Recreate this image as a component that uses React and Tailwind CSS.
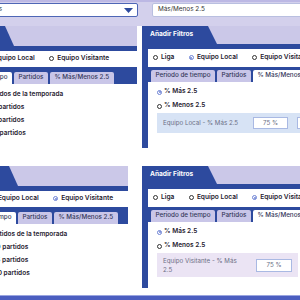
import React from "react";

const tabs = ["Periodo de tiempo", "Partidos", "% Más/Menos 2.5"];
const teams = ["Liga", "Equipo Local", "Equipo Visitante"];
const periods = [
  "Todos partidos de la temporada",
  "Últimos 10 partidos",
  "Últimos 15 partidos",
  "Últimos 20 partidos",
];

function Radio({ checked }) {
  if (checked) {
    return (
      <span className="flex h-[5px] w-[5px] shrink-0 items-center justify-center rounded-full border border-[#6d82d4]">
        <span className="h-[2px] w-[2px] rounded-full bg-[#6d82d4]" />
      </span>
    );
  }
  return <span className="h-[5px] w-[5px] shrink-0 rounded-full border border-[#333]" />;
}

function Panel({ team, active, tall, children }) {
  return (
    <div className="flex h-[122px] w-full flex-col overflow-hidden">
      <div className={`flex shrink-0 bg-[#cbc8e8] ${tall ? "h-[20px]" : "h-[18px]"}`}>
        <div className="flex w-[75px] shrink-0 items-center bg-[#2d4a9e] pl-[8px] text-[6.6px] font-bold whitespace-nowrap text-white [clip-path:polygon(0_0,88%_0,100%_100%,0_100%)]">
          Añadir Filtros
        </div>
      </div>
      <div className="flex flex-1 flex-col bg-[#2d4a9e] pl-[6px] pt-[5px]">
        <div
          className={`flex shrink-0 items-center gap-[14.5px] bg-white pl-[5px] ${tall ? "h-[16px]" : "h-[18px]"}`}
        >
          {teams.map((t, i) => (
            <div key={t} className="flex items-center gap-[3px] whitespace-nowrap text-[6.6px] font-semibold text-[#1f2230]">
              <Radio checked={i === team} />
              <span>{t}</span>
            </div>
          ))}
        </div>
        <div className={`flex shrink-0 gap-[2px] pl-[3px] ${tall ? "pt-[5px]" : "pt-[3px]"}`}>
          {tabs.map((t, i) => (
            <div
              key={t}
              className={`flex h-[12px] items-center whitespace-nowrap rounded-t-[2px] px-[4.5px] text-[6.3px] font-medium text-[#34385a] ${
                i === active ? "bg-white" : "bg-[#c9c6e8]"
              }`}
            >
              {t}
            </div>
          ))}
        </div>
        <div className="flex-1 bg-white">{children}</div>
      </div>
    </div>
  );
}

function PeriodList() {
  return (
    <div className="flex flex-col pl-[12px] pt-[4px]">
      {periods.map((p, i) => (
        <div key={p} className="flex h-[13px] items-center gap-[2px] whitespace-nowrap text-[6.5px] font-semibold text-[#1f2230]">
          <Radio checked={i === 0} />
          <span>{p}</span>
        </div>
      ))}
    </div>
  );
}

function OverUnder({ visitor }) {
  return (
    <div className="flex flex-col pl-[9px] pt-[3px]">
      <div className="flex h-[14px] items-center gap-[2px] text-[6.5px] font-semibold text-[#1f2230]">
        <Radio checked />
        <span>% Más 2.5</span>
      </div>
      <div className="flex h-[14px] items-center gap-[2px] text-[6.5px] font-semibold text-[#1f2230]">
        <Radio />
        <span>% Menos 2.5</span>
      </div>
      {visitor ? (
        <div className="flex h-[24px] w-[141px] items-center bg-[#ebe4f4] pl-[6px] text-[6.2px] text-[#6b6f85]">
          <span className="mr-[13px] w-[80px] leading-[9px]">Equipo Visitante - % Más 2.5</span>
          <span className="flex h-[13px] w-[36px] items-center justify-center border border-[#a9b9e3] bg-white">75 %</span>
        </div>
      ) : (
        <div className="flex h-[20px] items-center whitespace-nowrap bg-[#d7e3f5] pl-[6px] text-[6.2px] text-[#6b6f85]">
          <span className="w-[90px]">Equipo Local - % Más 2.5</span>
          <span className="flex h-[12px] w-[35px] shrink-0 items-center justify-center border border-[#a9b9e3] bg-white">75 %</span>
          <span className="ml-[9px] h-[12px] w-[35px] shrink-0 border border-[#a9b9e3] bg-white" />
        </div>
      )}
    </div>
  );
}

export default function App() {
  return (
    <div className="flex h-[300px] w-[300px] flex-col overflow-hidden bg-white font-['Inter',sans-serif]">
      <div className="flex h-[26px] shrink-0 items-start gap-[14px] border-t-2 border-[#bcb8e4] bg-[#d3d0ec] pt-[1px]">
        <div className="-ml-[58px] flex h-[14px] w-[196px] shrink-0 items-center justify-between rounded-[2px] border border-[#4e66b6] bg-white pl-[4px] pr-[4px] text-[6.4px] text-[#333]">
          <span>Todos los equipos</span>
          <svg width="9" height="5" viewBox="0 0 9 5">
            <path d="M0 0h9L4.5 5z" fill="#2d4a9e" />
          </svg>
        </div>
        <div className="flex h-[14px] w-[170px] shrink-0 items-center rounded-[2px] border border-[#b9bfe0] bg-white pl-[5px] text-[6.4px] text-[#333]">
          Más/Menos 2.5
        </div>
      </div>

      <div className="flex shrink-0 gap-[5px]">
        <div className="-ml-[61px] w-[198px] shrink-0">
          <Panel team={1} active={0} tall>
            <PeriodList />
          </Panel>
        </div>
        <div className="w-[200px] shrink-0">
          <Panel team={1} active={2}>
            <OverUnder />
          </Panel>
        </div>
      </div>

      <div className="mt-[18px] flex shrink-0 gap-[14px]">
        <div className="-ml-[57px] w-[185px] shrink-0">
          <Panel team={2} active={0} tall>
            <PeriodList />
          </Panel>
        </div>
        <div className="w-[200px] shrink-0">
          <Panel team={2} active={2}>
            <OverUnder visitor />
          </Panel>
        </div>
      </div>

      <div className="mt-[7px] flex-1 border-t border-[#9aa5e0] bg-[#4b5ec0]" />
    </div>
  );
}
